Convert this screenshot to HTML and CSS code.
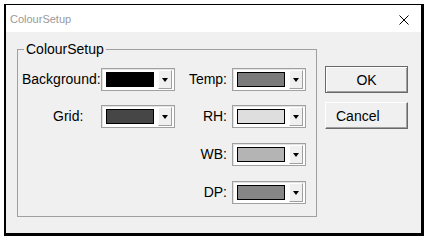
FILE: index.html
```html
<!DOCTYPE html>
<html lang="en">
<head>
  <meta charset="UTF-8">
  <title>ColourSetup</title>
  <link rel="stylesheet" href="styles.css">
</head>
<body>
  <div class="dialog">
    <div class="titlebar">
      <span class="title">ColourSetup</span>
      <svg class="close" width="10" height="10" viewBox="0 0 10 10">
        <path d="M0.5 0.5 L9.5 9.5 M9.5 0.5 L0.5 9.5" stroke="#000" stroke-width="1" fill="none"/>
      </svg>
    </div>
    <div class="client">
      <fieldset class="group">
        <legend>ColourSetup</legend>
        <div class="grid">
          <label class="lbl">Background:</label>
          <div class="combo"><span class="swatch" style="background:#000000"></span><span class="drop"><i></i></span></div>
          <label class="lbl lbl-r">Temp:</label>
          <div class="combo"><span class="swatch" style="background:#7b7b7b"></span><span class="drop"><i></i></span></div>

          <label class="lbl lbl-grid">Grid:</label>
          <div class="combo"><span class="swatch" style="background:#464646"></span><span class="drop"><i></i></span></div>
          <label class="lbl lbl-r">RH:</label>
          <div class="combo"><span class="swatch" style="background:#dedede"></span><span class="drop"><i></i></span></div>

          <label class="lbl lbl-r col3">WB:</label>
          <div class="combo"><span class="swatch" style="background:#b4b4b4"></span><span class="drop"><i></i></span></div>

          <label class="lbl lbl-r col3">DP:</label>
          <div class="combo"><span class="swatch" style="background:#868686"></span><span class="drop"><i></i></span></div>
        </div>
      </fieldset>
      <div class="buttons">
        <button class="btn btn-default">OK</button>
        <button class="btn btn-cancel">Cancel</button>
      </div>
    </div>
  </div>
</body>
</html>
```

FILE: styles.css
```css
html, body { margin: 0; padding: 0; background: #fff; }
body { font-family: "Liberation Sans", Arial, sans-serif; font-size: 14px; color: #000; }

.dialog { margin: 4px 0 0 4px; width: 420px; height: 232px; box-sizing: border-box; border: solid #000; border-width: 1px 3px 3px 2px; display: flex; flex-direction: column; }
.titlebar { height: 27px; flex: none; background: #fff; display: flex; align-items: center; justify-content: space-between; padding: 0 12px 0 4px; }
.title { font-size: 11px; color: #999; }
.close { display: block; margin-top: 2px; }

.client { flex: 1; background: #f0f0f0; display: flex; align-items: flex-start; padding: 9px 0 0 11px; }

.group { margin: 0; width: 300px; height: 176px; box-sizing: border-box; padding: 11px 0 0 4px; border: 1px solid #a0a0a0; }
.group legend { font-size: 14px; line-height: 16px; padding: 0 2px; margin-left: 2px; }

.grid { display: grid; grid-template-columns: 79px 74px 57px 74px; grid-template-rows: 37px 38px 38px 23px; align-items: start; }
.lbl { height: 23px; line-height: 23px; white-space: nowrap; }
.lbl-r { text-align: right; padding-right: 5px; }
.lbl-grid { padding-left: 31px; }
.col3 { grid-column: 3; }

.combo { width: 74px; height: 23px; box-sizing: border-box; display: flex; align-items: center; padding: 1px 2px 1px 4px; background: #fff; border: 1px solid #a0a0a0; box-shadow: inset 1px 1px 0 #e3e3e3; }
.swatch { width: 48px; height: 15px; box-sizing: border-box; border: 1px solid #000; }
.drop { margin-left: 4px; width: 14px; height: 19px; box-sizing: border-box; background: #f0f0f0; border: 1px solid; border-color: #fff #a0a0a0 #a0a0a0 #fff; display: flex; align-items: center; justify-content: center; }
.drop i { width: 0; height: 0; border-left: 3px solid transparent; border-right: 3px solid transparent; border-top: 4px solid #000; margin-top: 1px; }

.buttons { display: flex; flex-direction: column; gap: 9px; margin: 25px 0 0 8px; }
.btn { width: 83px; height: 27px; box-sizing: border-box; margin: 0; padding: 0; font-family: inherit; font-size: 14px; color: #000; background: #f0f0f0; border: 1px solid; border-color: #fff #696969 #696969 #fff; box-shadow: inset -1px -1px 0 #a0a0a0; }
.btn-default { border-color: #696969; box-shadow: inset 1px 1px 0 #fff, inset -1px -1px 0 #a0a0a0; }
.btn-cancel { text-align: left; padding-left: 10px; }
```
